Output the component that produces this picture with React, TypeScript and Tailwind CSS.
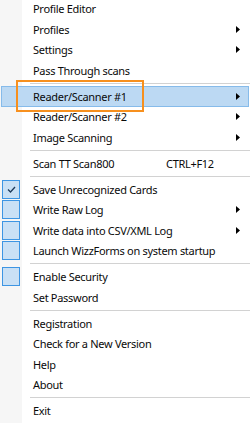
import React from "react";

type Item =
  | { sep: true }
  | {
      sep?: false;
      label: string;
      arrow?: boolean;
      shortcut?: string;
      check?: "on" | "off";
      hl?: boolean;
    };

const items: Item[] = [
  { label: "Profile Editor" },
  { label: "Profiles", arrow: true },
  { label: "Settings", arrow: true },
  { label: "Pass Through scans" },
  { sep: true },
  { label: "Reader/Scanner #1", arrow: true, hl: true },
  { label: "Reader/Scanner #2", arrow: true },
  { label: "Image Scanning", arrow: true },
  { sep: true },
  { label: "Scan TT Scan800", shortcut: "CTRL+F12" },
  { sep: true },
  { label: "Save Unrecognized Cards", check: "on" },
  { label: "Write Raw Log", arrow: true, check: "off" },
  { label: "Write data into CSV/XML Log", arrow: true, check: "off" },
  { label: "Launch WizzForms on system startup", check: "off" },
  { sep: true },
  { label: "Enable Security", check: "off" },
  { label: "Set Password" },
  { sep: true },
  { label: "Registration" },
  { label: "Check for a New Version" },
  { label: "Help" },
  { label: "About" },
  { sep: true },
  { label: "Exit" },
];

function Arrow() {
  return (
    <svg width="4" height="7" viewBox="0 0 4 7" className="shrink-0">
      <path d="M0 0 L4 3.5 L0 7 Z" fill="#000" />
    </svg>
  );
}

function CheckBox({ on }: { on: boolean }) {
  return (
    <div className="flex h-[19px] w-[18px] items-center justify-center border border-[#3d95e3] bg-[#c9e0f5]">
      {on && (
        <svg width="9" height="7" viewBox="0 0 9 7">
          <path d="M1 3.5 L3.5 6 L8 1" stroke="#1e3a5a" strokeWidth="1.3" fill="none" />
        </svg>
      )}
    </div>
  );
}

export default function App() {
  return (
    <div
      className="relative h-[423px] w-[250px] overflow-hidden bg-[linear-gradient(to_right,#f6f6f6_22px,#ffffff_22px)] text-[11px] text-[#0a0a0a]"
      style={{ fontFamily: '"Noto Sans", "Open Sans", sans-serif' }}
    >
      <div className="-mt-[1.5px] flex flex-col">
        {items.map((it, i) => {
          if (it.sep) {
            return (
              <div key={i} className="flex h-[5.5px] items-center pl-[30px]">
                <div className="h-px w-full bg-[#d2d2d2]" />
              </div>
            );
          }
          return (
            <div
              key={i}
              className={
                it.hl
                  ? "mx-px flex h-[20.5px] items-center border border-[#86bbea] bg-[#bcd9f3]"
                  : "flex h-[20.5px] items-center"
              }
            >
              <div
                className={
                  it.hl
                    ? "flex h-full w-[31px] shrink-0 items-center"
                    : "flex h-full w-[33px] shrink-0 items-center pl-[2px]"
                }
              >
                {it.check && <CheckBox on={it.check === "on"} />}
              </div>
              <div className="flex-1 whitespace-nowrap leading-none tracking-[-0.3px]">{it.label}</div>
              {it.shortcut && (
                <div className="w-[70px] shrink-0 whitespace-nowrap leading-none tracking-[-0.3px]">
                  {it.shortcut}
                </div>
              )}
              <div className={it.hl ? "mr-[8px] flex w-[4px] justify-end" : "mr-[10px] flex w-[4px] justify-end"}>
                {it.arrow && <Arrow />}
              </div>
            </div>
          );
        })}
      </div>
      <div className="pointer-events-none absolute left-[16px] top-[80px] h-[32px] w-[128px] border-2 border-[#f7901e]" />
    </div>
  );
}
